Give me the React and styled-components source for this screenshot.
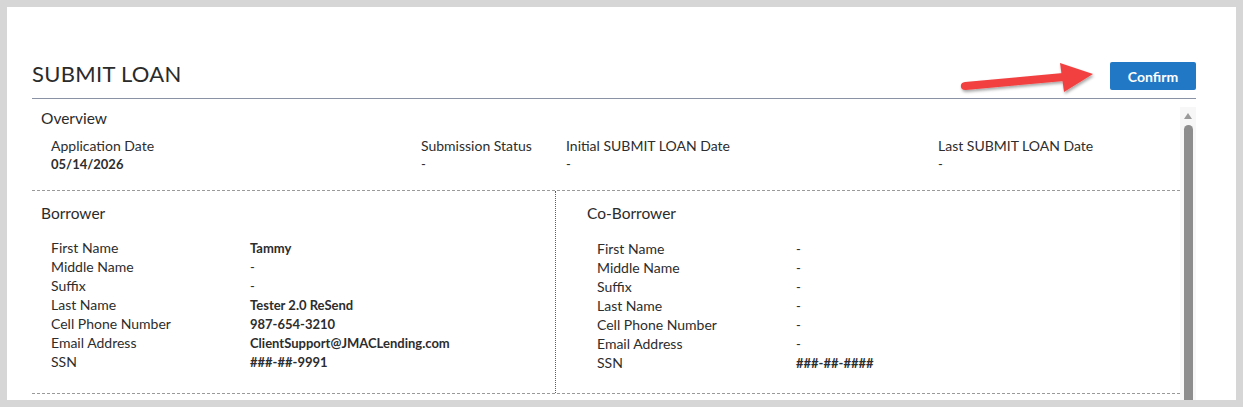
import React from 'react';
import styled, { createGlobalStyle } from 'styled-components';

const GlobalStyle = createGlobalStyle`
  html, body {
    margin: 0;
    padding: 0;
    background: #d6d6d6;
    font-family: 'Lato', 'Liberation Sans', sans-serif;
    color: #2d2d2d;
  }
`;

const Panel = styled.div`
  margin: 7px 0 0 7px;
  width: 1229px;
  height: 393px;
  background: #ffffff;
  box-sizing: border-box;
  padding: 0 40px 0 25px;
  overflow: hidden;
  display: flex;
  flex-direction: column;
`;

const Header = styled.header`
  position: relative;
  height: 92px;
  flex-shrink: 0;
  box-sizing: border-box;
  display: flex;
  align-items: flex-end;
  justify-content: space-between;
  border-bottom: 1px solid #8a93a6;
  padding-bottom: 8px;
`;

const Title = styled.h1`
  margin: 0 0 4px 0;
  font-size: 22px;
  font-weight: 400;
  line-height: 24px;
  letter-spacing: 0.3px;
  color: #2b2b2b;
`;

const ConfirmButton = styled.button`
  width: 86px;
  height: 28px;
  border: none;
  border-radius: 2px;
  background: #2179c6;
  color: #ffffff;
  font-family: 'Lato', 'Liberation Sans', sans-serif;
  font-weight: 700;
  font-size: 14px;
  cursor: pointer;
`;

const Arrow = styled.svg`
  position: absolute;
  left: 901px;
  top: 38px;
  overflow: visible;
`;

const Body = styled.div`
  flex: 1;
  display: flex;
  min-height: 0;
`;

const Content = styled.div`
  flex: 1;
  display: flex;
  flex-direction: column;
`;

const Scrollbar = styled.div`
  width: 16px;
  margin-top: 8px;
  background: #f7f7f7;
  display: flex;
  flex-direction: column;
  align-items: center;
  padding-top: 6px;
  box-sizing: border-box;
`;

const ScrollArrow = styled.div`
  width: 0;
  height: 0;
  border-left: 4px solid transparent;
  border-right: 4px solid transparent;
  border-bottom: 6px solid #9a9a9a;
`;

const Thumb = styled.div`
  width: 9px;
  flex: 1;
  margin-top: 6px;
  background: #8d8d8d;
  border-radius: 5px 5px 0 0;
`;

const Overview = styled.section`
  height: 92px;
  box-sizing: border-box;
  padding: 10px 0 0 9px;
  border-bottom: 1px dashed #9a9a9a;
`;

const SectionTitle = styled.h2`
  margin: 0;
  font-size: 15.5px;
  font-weight: 400;
  line-height: 18px;
  color: #2b2b2b;
`;

const OverviewGrid = styled.div`
  display: grid;
  grid-template-columns: 370px 145px 372px 1fr;
  margin: 10px 0 0 10px;
`;

const Field = styled.div`
  display: flex;
  flex-direction: column;
  line-height: 18px;
`;

const Label = styled.span`
  font-size: 14px;
  color: #2d2d2d;
`;

const Value = styled.span`
  font-size: 13px;
  font-weight: ${(p) => (p.bold ? 700 : 400)};
  color: #2d2d2d;
`;

const People = styled.div`
  display: grid;
  grid-template-columns: 524px 1fr;
  height: 202px;
  border-bottom: 1px dashed #9a9a9a;
`;

const Person = styled.section`
  box-sizing: border-box;
  padding: ${(p) => (p.right ? '13px 0 0 31px' : '13px 0 0 9px')};
  border-right: ${(p) => (p.right ? 'none' : '1px dotted #555e6e')};
`;

const Rows = styled.div`
  display: grid;
  grid-template-columns: 199px 1fr;
  grid-auto-rows: 19px;
  align-items: baseline;
  margin: ${(p) => (p.right ? '17px' : '16px')} 0 0 10px;
  line-height: 19px;
`;

const overview = [
  { label: 'Application Date', value: '05/14/2026', bold: true },
  { label: 'Submission Status', value: '-' },
  { label: 'Initial SUBMIT LOAN Date', value: '-' },
  { label: 'Last SUBMIT LOAN Date', value: '-' },
];

const borrower = [
  ['First Name', 'Tammy'],
  ['Middle Name', '-'],
  ['Suffix', '-'],
  ['Last Name', 'Tester 2.0 ReSend'],
  ['Cell Phone Number', '987-654-3210'],
  ['Email Address', 'ClientSupport@JMACLending.com'],
  ['SSN', '###-##-9991'],
];

const coBorrower = [
  ['First Name', '-'],
  ['Middle Name', '-'],
  ['Suffix', '-'],
  ['Last Name', '-'],
  ['Cell Phone Number', '-'],
  ['Email Address', '-'],
  ['SSN', '###-##-####'],
];

function PersonBlock({ title, rows, right }) {
  return (
    <Person right={right}>
      <SectionTitle>{title}</SectionTitle>
      <Rows right={right}>
        {rows.map(([label, value]) => (
          <React.Fragment key={label}>
            <Label>{label}</Label>
            <Value bold={value !== '-'}>{value}</Value>
          </React.Fragment>
        ))}
      </Rows>
    </Person>
  );
}

export default function App() {
  return (
    <>
      <GlobalStyle />
      <Panel>
        <Header>
          <Title>SUBMIT LOAN</Title>
          <Arrow width="170" height="60" viewBox="0 0 170 60">
            <defs>
              <filter id="shadow" x="-20%" y="-40%" width="140%" height="200%">
                <feDropShadow dx="1" dy="2" stdDeviation="1.6" floodColor="#000" floodOpacity="0.35" />
              </filter>
            </defs>
            <g filter="url(#shadow)" fill="#f24141">
              <path d="M32 37 L130 28 L131 36 L33 45 Q28 45.4 27.8 41 Q27.8 37.4 32 37 Z" />
              <path d="M127 18 L160 29 L131 47 Z" />
            </g>
          </Arrow>
          <ConfirmButton>Confirm</ConfirmButton>
        </Header>
        <Body>
          <Content>
            <Overview>
              <SectionTitle>Overview</SectionTitle>
              <OverviewGrid>
                {overview.map((f) => (
                  <Field key={f.label}>
                    <Label>{f.label}</Label>
                    <Value bold={f.bold}>{f.value}</Value>
                  </Field>
                ))}
              </OverviewGrid>
            </Overview>
            <People>
              <PersonBlock title="Borrower" rows={borrower} />
              <PersonBlock title="Co-Borrower" rows={coBorrower} right />
            </People>
          </Content>
          <Scrollbar>
            <ScrollArrow />
            <Thumb />
          </Scrollbar>
        </Body>
      </Panel>
    </>
  );
}
